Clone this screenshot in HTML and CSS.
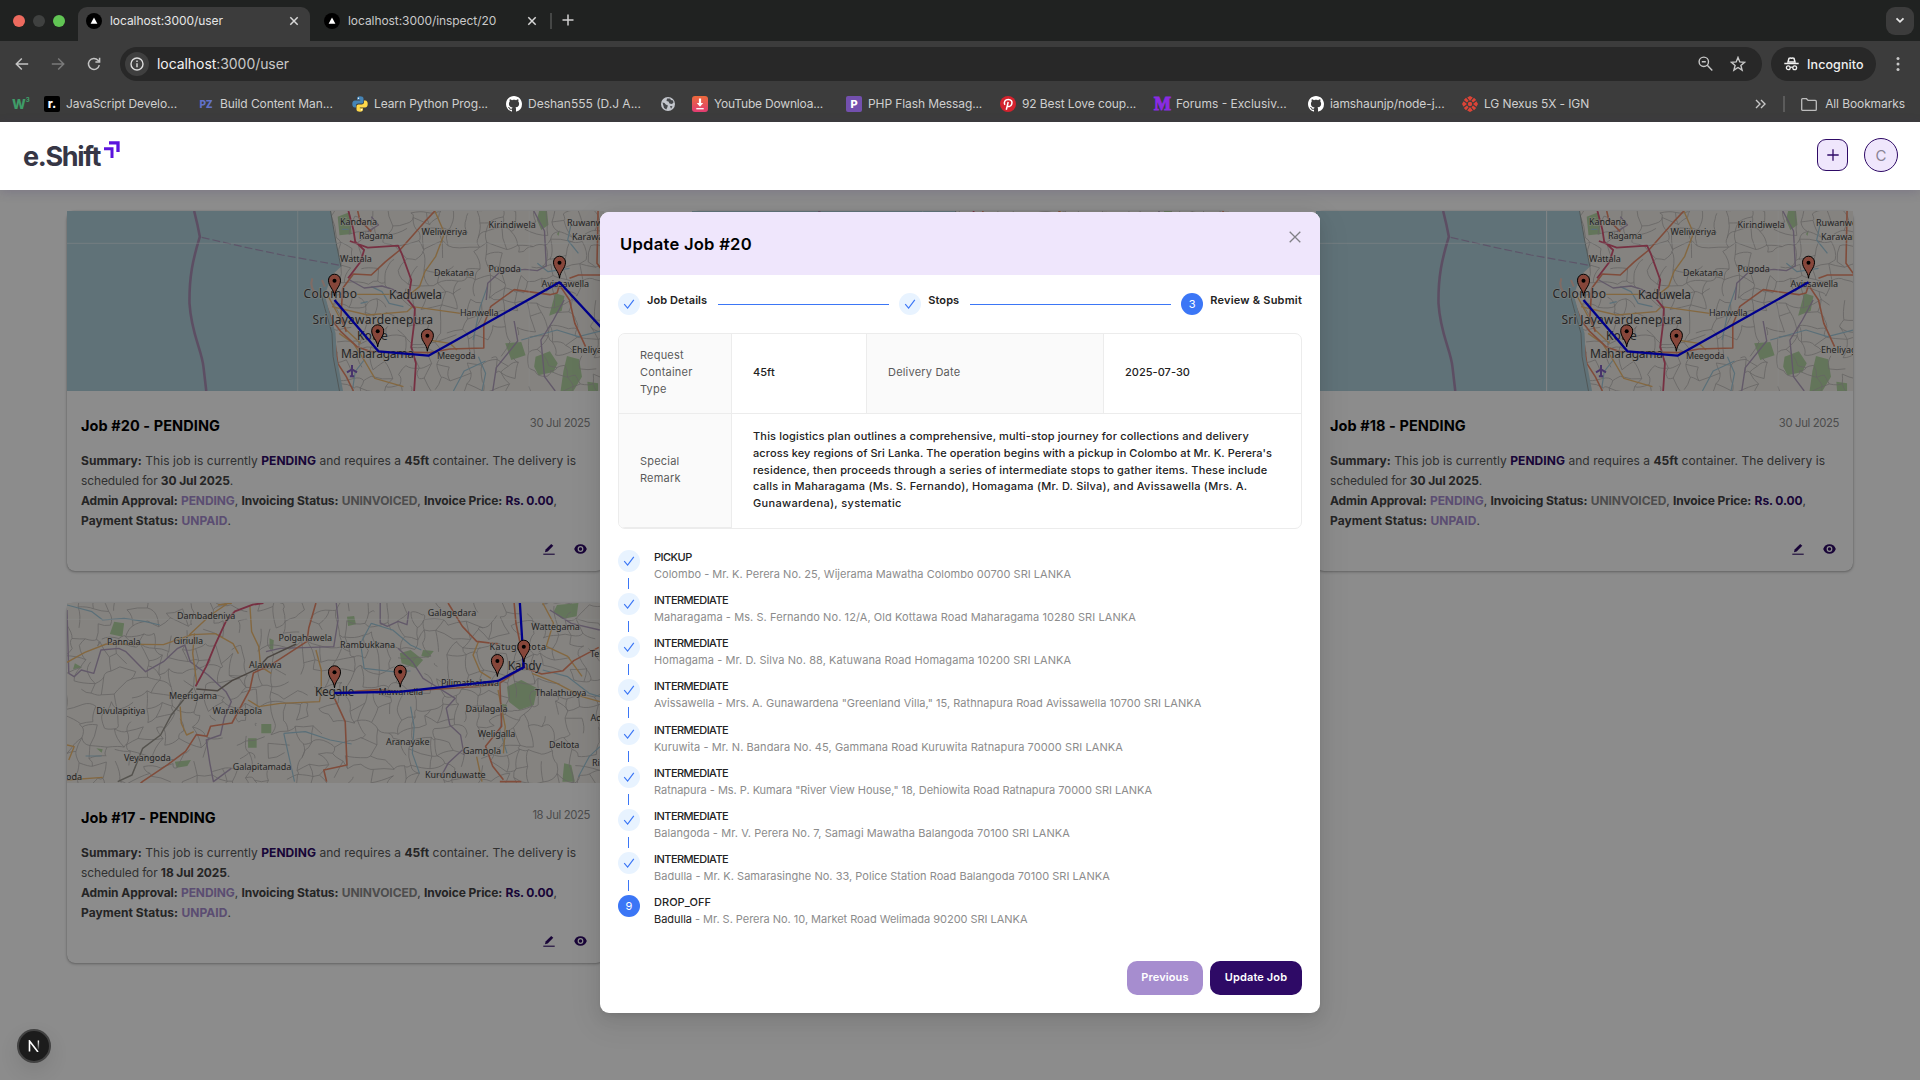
FILE: index.html
```html
<!DOCTYPE html>
<html lang="en">
<head>
<meta charset="utf-8">
<title>e.Shift</title>
<link rel="stylesheet" href="styles.css">
</head>
<body>
<svg class="defs" width="0" height="0">
  <symbol id="github" viewBox="0 0 16 16"><path fill="#fff" d="M8 0C3.58 0 0 3.58 0 8c0 3.54 2.29 6.53 5.47 7.59.4.07.55-.17.55-.38 0-.19-.01-.82-.01-1.49-2.01.37-2.53-.49-2.69-.94-.09-.23-.48-.94-.82-1.13-.28-.15-.68-.52-.01-.53.63-.01 1.08.58 1.23.82.72 1.21 1.87.87 2.33.66.07-.52.28-.87.51-1.07-1.78-.2-3.64-.89-3.64-3.95 0-.87.31-1.59.82-2.15-.08-.2-.36-1.02.08-2.12 0 0 .67-.21 2.2.82.64-.18 1.32-.27 2-.27s1.36.09 2 .27c1.53-1.04 2.2-.82 2.2-.82.44 1.1.16 1.92.08 2.12.51.56.82 1.27.82 2.15 0 3.07-1.87 3.75-3.65 3.95.29.25.54.73.54 1.48 0 1.07-.01 1.93-.01 2.2 0 .21.15.46.55.38A8.01 8.01 0 0 0 16 8c0-4.42-3.58-8-8-8z"/></symbol>
  <symbol id="favicon" viewBox="0 0 16 16"><circle cx="8" cy="8" r="8" fill="#000"/><path d="M8 4.6l3.4 6.2H4.6z" fill="#fff"/></symbol>
  <symbol id="close" viewBox="0 0 10 10"><path d="M1.3 1.3l7.4 7.4M8.7 1.3L1.3 8.7" stroke="currentColor" stroke-width="1.5" fill="none"/></symbol>
  <symbol id="check" viewBox="0 0 12 12"><path d="M1.2 6.2l3.4 3.9L10.8 1.8" stroke="#3b76f6" stroke-width="1.15" fill="none"/></symbol>
  <symbol id="pencil" viewBox="0 0 12 12"><path d="M2 9.2l.6-2.7L8.2.9l2.1 1.9-5.6 5.6z" fill="#2e0a66"/><path d="M.3 11.2h11.4" stroke="#2e0a66" stroke-width="1.1"/></symbol>
  <symbol id="eye" viewBox="0 0 13 10"><path d="M6.5.2C3.4.2 1.1 2.2.2 5c.9 2.8 3.2 4.8 6.3 4.8S11.9 7.8 12.8 5C11.9 2.2 9.6.2 6.5.2z" fill="#2e0a66"/><circle cx="6.5" cy="5" r="2.9" fill="#fff"/><circle cx="6.5" cy="5" r="1.7" fill="#2e0a66"/></symbol>
  <symbol id="pin" viewBox="-7 -8 14 26" overflow="visible"><path d="M0 15.500C-.7 8-6 6-6-.5a6 6 0 0 1 12 0C6 6 .7 8 0 15.500z" fill="#f5806a" stroke="#000" stroke-width="1"/><circle r="2" fill="#000"/></symbol>

  <symbol id="map-west" viewBox="0 0 537 180">
    <rect width="537" height="180" fill="#f2efe9"/>
    <g class="geo" transform="scale(.35714 .33333) translate(-48 -33)">
      <g fill="#b5d6a4"><path d="M1370 33h22l4 42-20 15-12-30zM1415 280l26 8-8 45-35 14zM1275 430l45-4 12 40-40 14zM1360 470l40-16 22 36-12 26-42 10-12-26zM1448 468l34 10 8 52-24 43h-36l8-60zM1505 545l30 5v23h-28zM1428 90l-8 12 4 6z"/><path d="M806 50l34-14 5 66-34 4z" fill="#d5e3b0"/></g>
      <path class="minor" data-seed="7"/>
      <g class="water"><path d="M900 260l30 15 20 35 40 10M1225 260l-20 60-20 100M1365 190l30 25 60-10M1200 470l20 50-10 53M1320 420l100-30 60 20 72-20M820 70h18M818 88h18M1480 160l-30-40 10-50M1130 573l30-60 60-30M880 480l-25 35-8 58M870 310l20-5"/></g>
      <g class="border"><path d="M1355 33l30 60 5 105-25 14-35-4-70 8-34 34-4 50M840 240l40 24 50-6 30 10 45 34M1240 573l10-70 60-80-10-60M1440 300l-30 60-35 60 10 110 30 43M900 50l20 25-30 20"/></g>
      <g class="secondary"><path d="M1078 33l27 67-25 70-30 45-15 45-35 30M860 283h95M790 320l100 25 110-10 15-15 135 20M810 400l40 30 30 50 30 55 80 25M780 290l20 40 30 60 40 40M1060 420l60 10 20 20"/></g>
      <g class="primary"><path d="M1078 33l-28 32-70 85-40 35-40 40-50-3-30 43-5 85 15 45M765 290l25 70 25 35 45 45 40 15 160 3 60-11 95-3v-70l20-55 65-50 100 15 20-5M770 300l25 100 11 90 24 40 20 43M1455 235l25-10h72M1430 260l25 40 15 70 30 70M862 33l6 27 32 35M1535 33l-3 157 20 30M1420 280l10-35"/></g>
      <g class="motorway"><path d="M836 33l14 57 5 35 25 25-10 35-35 50M840 123l50 20 85-6 10 23 27 80-9 60 19 25-2 45-8 70 13 50-5 83"/></g>
      <path class="sea" d="M48 33h738l14 87 15 80-25 25-20 60 10 40 20 75 3 70 18 103H48z"/>
      <path d="M786 33l14 87 15 80M760 285l10 40 20 75 3 70 18 103" class="coast"/>
      <path d="M735 235q-10 25 15 55M762 240l8 20" stroke="#e8c4b8" stroke-width="2"/>
      <path d="M404 33q10 42 16 77c-20 70-30 120-29 200 5 90 34 140 39 190l8 73" stroke="#a88fb5" stroke-width="2.600"/>
      <path d="M425 112l115 28 110 25 168 32" stroke="#a99abf" stroke-width="1.200" stroke-dasharray="8 3"/>
      <path d="M48 130h1504M694 33v540M1342 33v540" stroke="#fff" stroke-width=".8" opacity=".55"/>
      <path d="M846 495v33M832 517l14-9 14 9M840 529h12" stroke="#8461c4" stroke-width="2"/>
    </g>
    <g class="town">
      <text x="273" y="13.700" textLength="37">Kandana</text><text x="292" y="28" textLength="34">Ragama</text>
      <text x="354.600" y="24" textLength="45.400">Weliweriya</text><text x="421.400" y="16.500" textLength="47.500">Kirindiwela</text>
      <text x="500" y="14.500">Ruwanwella</text><text x="505" y="29">Karawanella</text>
      <text x="273" y="51" textLength="31.800">Wattala</text><text x="367" y="64.500" textLength="40">Dekatana</text>
      <text x="421.400" y="61" textLength="32.500">Pugoda</text><text x="474.600" y="76" textLength="47.500">Avissawella</text>
      <text x="393" y="104.500" textLength="38.500">Hanwella</text><text x="370" y="148" textLength="38.600">Meegoda</text>
      <text x="505" y="142">Eheliyagoda</text>
    </g>
    <g class="city">
      <text x="236.400" y="86.500" textLength="53.600">Colombo</text><text x="322" y="88.300" textLength="53">Kaduwela</text>
      <text x="245.400" y="112.500" textLength="120.700">Sri Jayawardenepura</text><text x="290" y="128.500" textLength="30.700">Kotte</text>
      <text x="274" y="147" textLength="73">Maharagama</text>
    </g>
  </symbol>
  <symbol id="pins-west" viewBox="0 0 537 180">
    <use href="#pin" x="260.500" y="61.700" width="14" height="26"/><use href="#pin" x="303.700" y="112.300" width="14" height="26"/>
    <use href="#pin" x="353.400" y="116.700" width="14" height="26"/><use href="#pin" x="485.500" y="43.700" width="14" height="26"/>
  </symbol>
</svg>

<header class="tabstrip">
  <div class="lights"><i class="red"></i><i class="dim"></i><i class="green"></i></div>
  <div class="tab active"><svg width="16" height="16"><use href="#favicon"/></svg><span>localhost:3000/user</span><svg class="x" width="10" height="10"><use href="#close"/></svg></div>
  <div class="tab"><svg width="16" height="16"><use href="#favicon"/></svg><span>localhost:3000/inspect/20</span><svg class="x" width="10" height="10"><use href="#close"/></svg></div>
  <i class="sep"></i>
  <svg class="newtab" width="12" height="12" viewBox="0 0 12 12"><path d="M6 .5v11M.5 6h11" stroke="#d0d0d0" stroke-width="1.500"/></svg>
  <div class="tabsearch"><svg width="10" height="7" viewBox="0 0 10 7"><path d="M1.500 1.300L5 4.800l3.500-3.500" stroke="#e6e6e6" stroke-width="1.800" fill="none"/></svg></div>
</header>
<div class="toolbar">
  <svg width="14" height="14" viewBox="0 0 14 14" class="tool"><path d="M13.200 7H1.500M6.800 1.500L1.300 7l5.500 5.500"/></svg>
  <svg width="14" height="14" viewBox="0 0 14 14" class="tool off"><path d="M.8 7h11.700M7.200 1.500L12.700 7l-5.500 5.500"/></svg>
  <svg width="14" height="14" viewBox="0 0 14 14" class="tool"><path d="M12.300 8.200A5.500 5.500 0 1 1 11 3.200l1.300 1.400"/><path d="M12.600.8v4.200H8.400"/></svg>
  <div class="omnibox">
    <span class="info"><svg width="14" height="14" viewBox="0 0 14 14"><circle cx="7" cy="7" r="6" fill="none" stroke="#ddd" stroke-width="1.400"/><path d="M7 6.200v4M7 3.600v1.500" stroke="#ddd" stroke-width="1.400"/></svg></span>
    <span class="url"><b>localhost</b>:3000/user</span>
    <svg class="zoomicon" width="15" height="16" viewBox="0 0 15 16"><circle cx="5.800" cy="5.800" r="4.700"/><path d="M9.300 9.300l5 5.300M3.800 5.800h4"/></svg>
    <svg class="star" width="16" height="16" viewBox="0 0 16 16"><path d="M8 1.400l1.800 4.500 4.800.4-3.700 3.100 1.200 4.700L8 11.500l-4.100 2.600 1.200-4.700L1.400 6.300l4.800-.4z"/></svg>
  </div>
  <div class="incog"><svg width="15" height="14" viewBox="0 0 15 14"><path d="M4 5L5 1.300q1-.6 2.500 0 1.500-.6 2.500 0L11 5z" fill="none" stroke="#f0f0f0" stroke-width="1.500"/><path d="M.3 6.500h14.400" stroke="#f0f0f0" stroke-width="1.500"/><g fill="none" stroke="#f0f0f0" stroke-width="1.300"><circle cx="4.300" cy="10.700" r="1.900"/><circle cx="10.700" cy="10.700" r="1.900"/><path d="M6.200 10.500q1.300-.8 2.600 0"/></g></svg><span>Incognito</span></div>
  <svg class="dots" width="4" height="16" viewBox="0 0 4 16" fill="#c8c8c8"><circle cx="2" cy="2.500" r="1.500"/><circle cx="2" cy="8" r="1.500"/><circle cx="2" cy="13.500" r="1.500"/></svg>
</div>
<nav class="bookmarks">
  <a class="only"><span class="w3">W<sup>3</sup></span></a>
  <a><i class="fav rdot">r.</i><span>JavaScript Develo...</span></a>
  <a><i class="fav pz">PZ</i><span>Build Content Man...</span></a>
  <a><svg width="16" height="16" viewBox="0 0 16 16"><path d="M8 .3C5.500.3 5 1.300 5 2.500v1.300h3.200v.6H3C1.200 4.400.3 5.800.3 8s.9 3.600 2.500 3.600H4V9.800C4 8.500 5 7.600 6.300 7.600h3.300c1.100 0 1.900-.8 1.900-1.900V2.500C11.500 1 10 .3 8 .3z" fill="#4584b6"/><path d="M8 15.700c2.500 0 3-1 3-2.200v-1.300H7.800v-.6H13c1.800 0 2.700-1.400 2.700-3.600s-.9-3.600-2.500-3.600H12v1.800c0 1.300-1 2.200-2.300 2.200H6.400c-1.100 0-1.900.8-1.900 1.900v3.200c0 1.500 1.500 2.200 3.500 2.200z" fill="#ffd94a"/><circle cx="6.500" cy="2.200" r=".7" fill="#fff"/><circle cx="9.500" cy="13.800" r=".7" fill="#fff"/></svg><span>Learn Python Prog...</span></a>
  <a><svg width="16" height="16"><use href="#github"/></svg><span class="loose">Deshan555 (D.J A...</span></a>
  <a class="only"><svg width="16" height="14" viewBox="-1 0 16 14"><circle cx="7" cy="7" r="7" fill="#c3c6cc"/><path d="M1.500 5.500l2 .5 1.500 1.700 1.600.3v1.800L5.300 12.500 3 11M6 1.500L5.500 4l2 .5 1 2 2.500.5 1.500-1.500-.5-2-2-.5-1-1.500zM9 9l2.500.3-1.500 2.500z" fill="#45474a"/></svg></a>
  <a><svg width="16" height="16" viewBox="0 0 16 16"><defs><linearGradient id="yt" x2="0" y2="1"><stop stop-color="#ec6a3c"/><stop offset="1" stop-color="#e23c72"/></linearGradient></defs><rect width="16" height="16" rx="3" fill="url(#yt)"/><path d="M8 2.500v6" stroke="#fff" stroke-width="2.200"/><path d="M4.800 7h6.400L8 10.700z" fill="#fff"/><path d="M4.300 12.700h7.400" stroke="#fff" stroke-width="1.300"/></svg><span class="tight">YouTube Downloa...</span></a>
  <a><i class="fav php">P</i><span>PHP Flash Messag...</span></a>
  <a><svg width="16" height="16" viewBox="0 0 16 16"><circle cx="8" cy="8" r="8" fill="#d3232e"/><path d="M6.300 13.800L8.200 6M4.900 8.800C3.500 6.300 5 3.400 8.300 3.400c2.800 0 4.300 2.200 3.500 4.700-.8 2.500-3.300 3.100-4.500 1.600" fill="none" stroke="#fff" stroke-width="1.500"/></svg><span>92 Best Love coup...</span></a>
  <a><i class="fav em">M</i><span class="loose">Forums - Exclusiv...</span></a>
  <a><svg width="16" height="16"><use href="#github"/></svg><span>iamshaunjp/node-j...</span></a>
  <a><svg width="16" height="16" viewBox="0 0 16 16" fill="#dc4437"><circle cx="8" cy="8" r="2.200"/><path d="M5.200 1.600L8 0l2.800 1.600L8 5zM5.200 14.400L8 16l2.800-1.600L8 11zM1.600 5.200L0 8l1.600 2.800L5 8zM14.400 5.200L16 8l-1.600 2.800L11 8zM1.800 4l2.200-2.200 2.600 3L5 6.500zM14.200 4L12 1.800l-2.600 3L11 6.500zM1.800 12L4 14.200l2.600-3L5 9.500zM14.200 12L12 14.200l-2.600-3L11 9.500z"/></svg><span>LG Nexus 5X - IGN</span></a>
  <div class="allmarks">
    <svg width="11" height="10" viewBox="0 0 11 10"><path d="M1 1l4 4-4 4M6 1l4 4-4 4" stroke="#c8c8c8" stroke-width="1.400" fill="none"/></svg>
    <i class="sep2"></i>
    <svg width="16" height="13" viewBox="0 0 16 13"><path d="M.7 11.500V1.500q0-.8.8-.8h4l1.600 1.700h7.200q1 0 1 1v8q0 .9-1 .9H1.500q-.8 0-.8-.8z" fill="none" stroke="#bdbdbd" stroke-width="1.300"/></svg>
    <span>All Bookmarks</span>
  </div>
</nav>

<div class="site-nav">
  <div class="logo"><span>e.Shift</span><svg width="16" height="17" viewBox="0 0 16 17"><path d="M5 1.800h9v9.200" stroke="#5b13dd" stroke-width="3.300" fill="none"/><path d="M0 7.800h8V17" stroke="#5b13dd" stroke-width="3" fill="none"/></svg></div>
  <div class="actions"><span class="plus"><svg width="12" height="12" viewBox="0 0 12 12"><path d="M6 .3v11.400M.3 6h11.400" stroke="#2e0a66" stroke-width="1.300"/></svg></span><span class="avatar">C</span></div>
</div>

<main>
  <section class="cards">
    <article class="card">
      <svg class="map" viewBox="0 0 537 180"><use href="#map-west"/><g class="geo" transform="scale(.35714 .33333) translate(-48 -33)"><path class="route" d="M797 300l123 154 140 13 367-220 125 145"/></g><use href="#pins-west"/></svg>
      <div class="body">
        <div class="head"><h3>Job #20 - PENDING</h3><time>30 Jul 2025</time></div>
        <p><span><b>Summary:</b> This job is currently <b class="deep">PENDING</b> and requires a <b>45ft</b> container. The delivery is</span><span>scheduled for <b>30 Jul 2025</b>.</span><span><b>Admin Approval:</b> <b class="lilac">PENDING</b>, <b>Invoicing Status:</b> <b class="gray">UNINVOICED</b>, <b>Invoice Price:</b> <b class="deep">Rs. 0.00</b>,</span><span><b>Payment Status:</b> <b class="lilac">UNPAID</b>.</span></p>
        <div class="tools"><svg width="12" height="12"><use href="#pencil"/></svg><svg width="13" height="10"><use href="#eye"/></svg></div>
      </div>
    </article>
    <article class="card"><svg class="map" viewBox="0 0 537 180"><use href="#map-west"/></svg></article>
    <article class="card">
      <svg class="map" viewBox="0 0 537 180"><use href="#map-west"/><path d="M230.500 0v180" stroke="#fff" opacity=".5"/><g class="geo" transform="scale(.35714 .33333) translate(-48 -33)"><path class="route" d="M797 300l123 154 140 13 367-220"/></g><use href="#pins-west"/></svg>
      <div class="body">
        <div class="head"><h3>Job #18 - PENDING</h3><time>30 Jul 2025</time></div>
        <p><span><b>Summary:</b> This job is currently <b class="deep">PENDING</b> and requires a <b>45ft</b> container. The delivery is</span><span>scheduled for <b>30 Jul 2025</b>.</span><span><b>Admin Approval:</b> <b class="lilac">PENDING</b>, <b>Invoicing Status:</b> <b class="gray">UNINVOICED</b>, <b>Invoice Price:</b> <b class="deep">Rs. 0.00</b>,</span><span><b>Payment Status:</b> <b class="lilac">UNPAID</b>.</span></p>
        <div class="tools"><svg width="12" height="12"><use href="#pencil"/></svg><svg width="13" height="10"><use href="#eye"/></svg></div>
      </div>
    </article>
    <article class="card">
      <svg class="map" viewBox="0 0 537 180">
        <rect width="537" height="180" fill="#f2efe9"/>
        <g class="geo" transform="scale(.35714 .33333) translate(-48 -39)">
          <g fill="#b5d6a4"><path d="M180 95l28 5-5 40-35-8zM980 190l30-10 35 30-20 25-40-15zM1045 180l30 3-15 20-20-5zM832 80l20-2 5 25-22 5zM592 402h28v28h-28zM555 445h24v28h-24zM1420 45l60-6-5 40-40 8-25-20zM1280 290l40-20 45 25-10 50-40 15-30-25zM350 515l45-5-10 18-30 5zM1440 520l20 5 10 50h-35zM70 220l20 12-25 6zM615 145l12 6-2 30-10-5zM130 475l18 3-3 10zM1260 340l20 5-5 20z"/></g>
          <path class="minor" data-seed="23"/>
          <g class="water"><path d="M48 45l70 20 30 25 60-5 60 10 40 10M900 100l-30 60 10 75 80 10 50-2M900 100l60 20 50 45 30 15M655 430l60-5 70 25 60 12M655 430l30 145M1010 350l10 60-5 80 20 60M1380 240l70 20 60 50 30 10M1540 470l-30 30-30 60M100 498h45M1270 360l-10 60 20 70"/></g>
          <g class="border"><path d="M48 60l5 190 15 10 20-20 35 10 20-70 50-5 20 10 55 60 50-30 40-40 20-10 15 50 50 40 50 50 15 30-20 50-10 50-40 15 10 70 10 55 50-40M605 185l40-10 150-5 12-80-5-51M925 39v60l20 10 30-15 25 10 5-40M975 175l40 40 30 50 30 20 60 40-25 30 10 50 30 30 10 60M1155 480l-40 40-20 40M1400 60l60 40 80 20"/></g>
          <path d="M400 295l-60 80-30 60-50 40-30 80-40 20" stroke="#9c9890" stroke-width="1.500"/>
          <path d="M410 297l60 5 40-30 70-35 30-35 80-40" stroke="#8a8078" stroke-width="1.500"/>
          <g class="secondary"><path d="M48 217l50-30 60-25 160 2 80-30 65-3 50 30 15 30M405 130l-5 60 12 95M390 135l60-60 50-36M560 45l5 80 20 45 5 60 30 20M745 180l15 60 0 60-5 35-110 5-60 10-30-20M365 350l3 50 15 35 20-10M48 465l20 5-15 40M48 570l100-8M1200 155l-15 40 20 50 30 20M1380 39l30 60-20 70 60 30 40 60M1350 250l70 30 70 40 50 15M1195 500l15 75M1255 300l20 110-5 80M470 45l40-6"/></g>
          <g class="primary"><path d="M745 39l-20 75-5 40-100 70-50 25-10 50-50 100-60 10-10 30-30-5-30 50-50 40-70 50-40 40M797 325l30 70 5 130-65 15 8 35M797 309l120-10 60 5 160-10 110-10M1115 39l40 70 40 45 60 8M1300 39l5 60 25 130-70 50 5 130-45 60 20 60 30 40M1327 232l50 20 60-10 30-30 70-40M1260 575l60 0"/></g>
          <g class="motorway"><path d="M598 39l-30 5-50 20-25 30-30 70-25 65-30 60"/></g>
          <path d="M48 88h1504" stroke="#fff" stroke-width=".8" opacity=".55"/>
        </g>
        <g class="town">
          <text x="110" y="16" textLength="58.200">Dambadeniya</text><text x="40" y="41.500" textLength="33.500">Pannala</text><text x="106.500" y="41" textLength="29.600">Giriulla</text>
          <text x="182" y="64.500" textLength="32.500">Alawwa</text><text x="211.500" y="37.500" textLength="53.500">Polgahawela</text><text x="273" y="45" textLength="55">Rambukkana</text>
          <text x="360.700" y="13" textLength="48.600">Galagedara</text><text x="464.300" y="27" textLength="48.600">Wattegama</text><text x="422.500" y="46.500" textLength="56.500">Katugastota</text>
          <text x="374" y="83" textLength="58">Pilimathalawa</text><text x="468" y="93" textLength="51.400">Thalathuoya</text><text x="311.400" y="92.300" textLength="44.600">Mawanella</text>
          <text x="102" y="95.500" textLength="48">Meerigama</text><text x="29.300" y="110.700" textLength="49">Divulapitiya</text><text x="145.400" y="110.700" textLength="49.600">Warakapola</text>
          <text x="398.600" y="109.300" textLength="42">Daulagala</text><text x="410.700" y="134" textLength="37.500">Weligalla</text><text x="482" y="145" textLength="30.400">Deltota</text>
          <text x="396" y="151.300" textLength="38">Gampola</text><text x="319" y="142" textLength="43.600">Aranayake</text><text x="57" y="158" textLength="46.800">Veyangoda</text>
          <text x="165.700" y="167" textLength="58.600">Galapitamada</text><text x="358" y="175.300" textLength="60.700">Kurunduwatte</text><text x="-1" y="177.300">oda</text>
          <text x="523" y="53.700">Tel</text><text x="523.600" y="118">Ad</text><text x="525" y="162.700">Ri</text>
        </g>
        <g class="city"><text x="440.700" y="66.500" textLength="33.600">Kandy</text><text x="248" y="92.500" textLength="39.300">Kegalle</text></g>
        <path d="M267.500 90l67-1.300 96.500-10.700 25.700-13.700-1.400-25.600-2.500-40" fill="none" stroke="#00f" stroke-width="2.300"/>
        <use href="#pin" x="260.500" y="61.300" width="14" height="26"/><use href="#pin" x="326.200" y="60.700" width="14" height="26"/><use href="#pin" x="423.400" y="50" width="14" height="26"/><use href="#pin" x="449.800" y="35.700" width="14" height="26"/>
      </svg>
      <div class="body">
        <div class="head"><h3>Job #17 - PENDING</h3><time>18 Jul 2025</time></div>
        <p><span><b>Summary:</b> This job is currently <b class="deep">PENDING</b> and requires a <b>45ft</b> container. The delivery is</span><span>scheduled for <b>18 Jul 2025</b>.</span><span><b>Admin Approval:</b> <b class="lilac">PENDING</b>, <b>Invoicing Status:</b> <b class="gray">UNINVOICED</b>, <b>Invoice Price:</b> <b class="deep">Rs. 0.00</b>,</span><span><b>Payment Status:</b> <b class="lilac">UNPAID</b>.</span></p>
        <div class="tools"><svg width="12" height="12"><use href="#pencil"/></svg><svg width="13" height="10"><use href="#eye"/></svg></div>
      </div>
    </article>
  </section>

  <div class="overlay">
    <div class="modal">
      <div class="modal-head"><h2>Update Job #20</h2><svg width="12" height="12" viewBox="0 0 12 12"><path d="M.7.7l10.600 10.600M11.300.7L.7 11.300" stroke="#808086" stroke-width="1.300"/></svg></div>
      <div class="steps">
        <span class="dot"><svg width="12" height="12"><use href="#check"/></svg></span><b>Job Details</b><i></i>
        <span class="dot"><svg width="12" height="12"><use href="#check"/></svg></span><b>Stops</b><i></i>
        <span class="dot now">3</span><b class="last">Review &amp; Submit</b>
      </div>
      <div class="table">
        <div class="th">Request<br>Container<br>Type</div><div>45ft</div><div class="th">Delivery Date</div><div>2025-07-30</div>
        <div class="th">Special<br>Remark</div>
        <div class="remark"><span>This logistics plan outlines a comprehensive, multi-stop journey for collections and delivery</span><span>across key regions of Sri Lanka. The operation begins with a pickup in Colombo at Mr. K. Perera's</span><span>residence, then proceeds through a series of intermediate stops to gather items. These include</span><span>calls in Maharagama (Ms. S. Fernando), Homagama (Mr. D. Silva), and Avissawella (Mrs. A.</span><span>Gunawardena), systematic</span></div>
      </div>
      <ol class="route-list">
        <li><span class="dot"><svg width="12" height="12"><use href="#check"/></svg></span><div><b>PICKUP</b><span>Colombo - Mr. K. Perera No. 25, Wijerama Mawatha Colombo 00700 SRI LANKA</span></div></li>
        <li class="wide"><span class="dot"><svg width="12" height="12"><use href="#check"/></svg></span><div><b>INTERMEDIATE</b><span>Maharagama - Ms. S. Fernando No. 12/A, Old Kottawa Road Maharagama 10280 SRI LANKA</span></div></li>
        <li class="wide"><span class="dot"><svg width="12" height="12"><use href="#check"/></svg></span><div><b>INTERMEDIATE</b><span>Homagama - Mr. D. Silva No. 88, Katuwana Road Homagama 10200 SRI LANKA</span></div></li>
        <li><span class="dot"><svg width="12" height="12"><use href="#check"/></svg></span><div><b>INTERMEDIATE</b><span>Avissawella - Mrs. A. Gunawardena "Greenland Villa," 15, Rathnapura Road Avissawella 10700 SRI LANKA</span></div></li>
        <li class="wide"><span class="dot"><svg width="12" height="12"><use href="#check"/></svg></span><div><b>INTERMEDIATE</b><span>Kuruwita - Mr. N. Bandara No. 45, Gammana Road Kuruwita Ratnapura 70000 SRI LANKA</span></div></li>
        <li class="narrow"><span class="dot"><svg width="12" height="12"><use href="#check"/></svg></span><div><b>INTERMEDIATE</b><span>Ratnapura - Ms. P. Kumara "River View House," 18, Dehiowita Road Ratnapura 70000 SRI LANKA</span></div></li>
        <li class="wide"><span class="dot"><svg width="12" height="12"><use href="#check"/></svg></span><div><b>INTERMEDIATE</b><span>Balangoda - Mr. V. Perera No. 7, Samagi Mawatha Balangoda 70100 SRI LANKA</span></div></li>
        <li><span class="dot"><svg width="12" height="12"><use href="#check"/></svg></span><div><b>INTERMEDIATE</b><span>Badulla - Mr. K. Samarasinghe No. 33, Police Station Road Balangoda 70100 SRI LANKA</span></div></li>
        <li class="narrow"><span class="dot now">9</span><div><b class="drop">DROP_OFF</b><span><em>Badulla</em> - Mr. S. Perera No. 10, Market Road Welimada 90200 SRI LANKA</span></div></li>
      </ol>
      <div class="modal-foot"><button class="prev">Previous</button><button class="save">Update Job</button></div>
    </div>
  </div>
  <div class="next-badge"><svg width="12" height="12" viewBox="0 0 12 12"><defs><linearGradient id="nfade" x2="0" y2="1"><stop stop-color="#fff"/><stop offset="1" stop-color="#fff" stop-opacity=".1"/></linearGradient></defs><path d="M1.500 11.500V1l8.500 11" stroke="#fff" stroke-width="1.600" fill="none"/><path d="M9.700.5h1.400v9H9.700z" fill="url(#nfade)"/></svg></div>
</main>
<script src="script.js"></script>
</body>
</html>
```
FILE: styles.css
```css
* { box-sizing: border-box; }
body { margin: 0; width: 1920px; height: 1080px; overflow: hidden; display: flex; flex-direction: column; font-family: Inter, "Liberation Sans", sans-serif; font-size: 11px; background: #8c8c8c; color: #222; }
svg { display: block; flex: none; }
.defs { position: absolute; }
h2, h3, p, ol { margin: 0; padding: 0; }
i, em { font-style: normal; }

/* browser frame */
.tabstrip { height: 41px; background: #202221; display: flex; align-items: center; flex: none; }
.lights { display: flex; gap: 8px; padding-left: 13px; width: 78px; }
.lights i { width: 12px; height: 12px; border-radius: 50%; }
.red { background: #ed6a5e; } .dim { background: #3f4140; } .green { background: #61c554; }
.tab { display: flex; align-items: center; width: 232px; height: 34px; padding: 0 11px 6px 8px; margin-top: 7px; color: #c9c9c9; font-size: 12px; letter-spacing: -.065px; white-space: nowrap; }
.tab + .tab { width: 237px; padding: 0 10px 6px 14px; }
.tab span { margin: -1px auto 0 8px; }
.tab.active { background: #3c3c3c; border-radius: 9px 9px 0 0; color: #e6e6e6; }
.tab .x { color: #d8d8d8; }
.sep { width: 2px; height: 16px; background: #454746; margin-left: 3px; }
.newtab { margin: 0 0 1px 10px; }
.tabsearch { margin-left: auto; margin-right: 6px; width: 28px; height: 28px; border-radius: 9px; background: #3c3c3c; display: flex; align-items: center; justify-content: center; }
.toolbar { height: 46px; background: #3c3c3c; display: flex; align-items: center; padding: 0 20px 0 15px; flex: none; }
.tool { fill: none; stroke: #c4c4c4; stroke-width: 1.5; margin-right: 22px; }
.tool.off { stroke: #7a7a7a; }
.omnibox { width: 1642px; height: 34px; margin-left: -3px; border-radius: 17px; background: #282828; display: flex; align-items: center; padding: 0 16px 0 5px; }
.info { width: 24px; height: 24px; border-radius: 50%; background: #3f3f3f; display: flex; align-items: center; justify-content: center; }
.url { margin: -1px auto 0 8px; font-size: 14px; letter-spacing: -.06px; color: #c8c8c8; }
.url b { font-weight: 400; color: #f2f2f2; }
.zoomicon, .star { fill: none; stroke: #c8c8c8; stroke-width: 1.4; }
.star { margin-left: 17px; }
.incog { margin-left: 9px; width: 105px; height: 34px; border-radius: 17px; background: #282828; color: #f0f0f0; font-size: 12.5px; font-weight: 500; letter-spacing: .1px; display: flex; align-items: center; gap: 8px; padding-left: 13px; }
.dots { margin-left: 20px; }
.bookmarks { height: 35px; background: #3c3c3c; display: flex; align-items: center; padding: 0 0 1px 12px; color: #cfcfcf; font-size: 12px; letter-spacing: -.1px; flex: none; }
.bookmarks a { width: 154px; display: flex; align-items: center; gap: 6px; white-space: nowrap; flex: none; }
.bookmarks a span { margin-top: -1px; }
.bookmarks a.only { width: 32px; }
.bookmarks .loose { letter-spacing: 0; }
.bookmarks .tight { letter-spacing: -.19px; }
.fav { width: 16px; height: 16px; font-weight: 800; font-size: 12px; line-height: 16px; text-align: center; color: #fff; }
.rdot { background: #000; border-radius: 2px; }
.pz { color: #6272c9; font-size: 10px; }
.php { background: #7350ae; border-radius: 2px; font-size: 11px; }
.em { color: #8a2be2; font: 900 18px/16px "Liberation Serif", serif; -webkit-text-stroke: 1px #8a2be2; }
.w3 { color: #3f9c68; font: 800 13px/16px Inter, sans-serif; display: flex; }
.w3 sup { font-size: 6px; line-height: 8px; }
.allmarks { margin-left: auto; display: flex; align-items: center; padding-right: 15px; }
.sep2 { width: 2px; height: 16px; background: #5b5b5b; margin: 0 16px 0 17px; }
.allmarks span { margin: -1px 0 0 8px; }

/* site header */
.site-nav { height: 68px; background: #fff; display: flex; align-items: center; justify-content: space-between; padding: 0 22px 2px 23px; flex: none; position: relative; z-index: 3; box-shadow: 0 2px 10px rgba(70, 50, 110, .22); }
.logo { display: flex; align-items: flex-start; gap: 4px; color: #363645; font-size: 27px; font-weight: 700; letter-spacing: -1.35px; line-height: 32px; padding-top: 4px; }
.actions { display: flex; align-items: center; gap: 16px; }
.plus, .avatar { background: #efe6fc; border: 1px solid #2e0a66; display: flex; align-items: center; justify-content: center; }
.plus { width: 31px; height: 32px; border-radius: 9px; }
.avatar { width: 34px; height: 34px; border-radius: 50%; color: #8a8394; font-size: 15px; }

/* job cards */
main { flex: 1; position: relative; background: #fff; }
.cards { display: grid; grid-template-columns: repeat(3, 537px); gap: 32px 87.5px; padding: 21px 0 0 67px; }
.card { height: 360px; background: #fff; border-radius: 8px; box-shadow: 0 1px 3px rgba(0, 0, 0, .3), 0 0 1px rgba(0, 0, 0, .3); }
.map { width: 537px; height: 180px; }
.geo path { fill: none; vector-effect: non-scaling-stroke; stroke-linejoin: round; }
.geo g[fill] path { fill: inherit; }
.geo path[fill="#d5e3b0"] { fill: #d5e3b0; }
.geo .sea { fill: #b0d0da; }
.minor { stroke: #bbb7b6; stroke-width: .8; }
.water path { stroke: #a5cbdc; stroke-width: 1.2; }
.border path { stroke: #b4a3c0; stroke-width: 1.4; }
.coast { stroke: #94a0a0; stroke-width: 1; }
.secondary path { stroke: #f0bd76; stroke-width: 1.4; }
.primary path { stroke: #ea8b6c; stroke-width: 1.6; }
.motorway path { stroke: #d85878; stroke-width: 1.8; }
.geo .route { stroke: #00f; stroke-width: 2.3; }
.town text, .city text { font-family: "Noto Sans", sans-serif; fill: #444; stroke: #f2efe9; stroke-width: 1.5; stroke-opacity: .6; paint-order: stroke; }
.town text { font-size: 9px; }
.city text { font-size: 12px; }
.body { padding: 23px 14px 0; }
.head { display: flex; justify-content: space-between; align-items: flex-start; }
.head h3 { font-size: 14.5px; line-height: 24px; font-weight: 700; letter-spacing: .08px; color: #000; }
.head time { font-size: 11.3px; line-height: 18px; letter-spacing: -.36px; color: #8c8c8c; }
.body p { margin-top: 13px; font-size: 12px; line-height: 20px; color: #595959; white-space: nowrap; }
.body p span { display: block; letter-spacing: .045px; }
.body p span:nth-child(2) { letter-spacing: -.12px; }
.body p span:nth-child(3) { letter-spacing: -.082px; }
.body p b { color: #444; font-weight: 700; }
.body p .deep { color: #2e0a66; }
.body p .lilac { color: #a68dcf; }
.body p .gray { color: #8c8c8c; }
.tools { display: flex; justify-content: flex-end; align-items: center; gap: 19px; padding: 12px 3px 0 0; }

/* dialog */
.overlay { position: absolute; inset: 0; z-index: 1; background: rgba(0, 0, 0, .45); display: flex; justify-content: center; align-items: flex-start; padding-top: 22px; }
.modal { width: 720px; height: 801px; background: #fff; border-radius: 9px; overflow: hidden; box-shadow: 0 6px 16px rgba(0, 0, 0, .08), 0 3px 6px -4px rgba(0, 0, 0, .12), 0 9px 28px 8px rgba(0, 0, 0, .05); }
.modal-head { height: 63px; background: #efe6fc; display: flex; justify-content: space-between; padding: 19px 19px 0 20px; }
.modal-head h2 { font-size: 16.6px; line-height: 26px; font-weight: 600; letter-spacing: .25px; color: #000; }
.dot { width: 22px; height: 22px; border-radius: 50%; background: #e8f3ff; display: flex; align-items: center; justify-content: center; flex: none; }
.dot.now { background: #3b76f6; color: #fff; font-size: 11px; }
.steps { display: flex; align-items: center; padding: 18px 18px 0; height: 40px; }
.steps b { font-weight: 600; font-size: 11px; line-height: 16px; letter-spacing: .09px; margin: -8px 0 0 7px; white-space: nowrap; }
.steps .last { letter-spacing: .22px; }
.steps i { height: 1px; background: #3b76f6; flex: 171 0 0; margin: 0 10.5px 0 11px; }
.steps i ~ i { flex-grow: 201; }
.table { margin: 18px 18px 0; height: 196px; border: 1px solid #ececec; border-radius: 7px; overflow: hidden; display: grid; grid-template: 80px 1fr / 113px 135px 237px 1fr; font-weight: 500; line-height: 16.8px; letter-spacing: .03px; }
.table > div { padding: 0 22px 2px 21px; display: flex; align-items: center; border-left: 1px solid #ececec; border-bottom: 1px solid #ececec; margin: 0 0 0 -1px; }
.table > .th { background: #fafafa; color: #5a5a5a; font-weight: 400; letter-spacing: .2px; }
.table > .remark { grid-column: span 3; flex-direction: column; align-items: flex-start; justify-content: center; white-space: nowrap; border-bottom: 0; letter-spacing: .17px; }
.remark span:nth-child(2) { letter-spacing: .09px; }
.remark span:nth-child(4) { letter-spacing: .22px; }
.remark span:nth-child(5) { letter-spacing: .34px; }
.route-list { list-style: none; margin: 21px 18px 0; }
.route-list li { display: flex; height: 43.15px; gap: 14px; position: relative; }
.route-list li:not(:last-child)::after { content: ""; position: absolute; left: 10px; top: 28px; width: 1px; height: 11px; background: #3b76f6; }
.route-list div { display: flex; flex-direction: column; line-height: 17px; white-space: nowrap; margin-top: -1px; }
.route-list b { font-weight: 500; letter-spacing: -.53px; }
.route-list .drop { letter-spacing: .04px; }
.route-list div span { color: #8c8c8c; letter-spacing: .022px; }
.route-list .wide div span { letter-spacing: .08px; }
.route-list .narrow div span { letter-spacing: -.03px; }
.route-list em { color: #222; }
.modal-foot { display: flex; justify-content: flex-end; gap: 7px; padding: 23px 18px 0; }
.modal-foot button { height: 34px; border: 0; border-radius: 10px; color: #fff; font: 600 11px Inter, sans-serif; letter-spacing: .12px; padding: 0 0 2px; }
.prev { width: 76px; background: #a68dcf; }
.save { width: 92px; background: #2e0a66; }
.next-badge { position: absolute; z-index: 4; left: 17px; bottom: 17px; width: 34px; height: 34px; border-radius: 50%; background: #1c1c1c; border: 2px solid #424242; display: flex; align-items: center; justify-content: center; box-shadow: 0 8px 20px rgba(0, 0, 0, .1); }
```
FILE: script.js
```js
// Fills each map with a web of minor roads, repeatable for a given seed.
document.querySelectorAll('.minor').forEach(function (path) {
  var s = +path.dataset.seed;
  function rnd() { s = (s * 16807) % 2147483647; return s / 2147483647; }
  for (var k = 0; k < 9; k++) rnd();
  var step = 36, cols = 43, rows = 17, pts = [], d = '';
  for (var r = 0; r < rows; r++) {
    pts.push([]);
    for (var c = 0; c < cols; c++) pts[r].push([48 + c * step + (rnd() - .5) * 34, 25 + r * step + (rnd() - .5) * 34]);
  }
  function edge(a, b) {
    d += 'M' + a[0].toFixed(1) + ' ' + a[1].toFixed(1) + 'Q' + ((a[0] + b[0]) / 2 + (rnd() - .5) * 22).toFixed(1) + ' ' + ((a[1] + b[1]) / 2 + (rnd() - .5) * 22).toFixed(1) + ' ' + b[0].toFixed(1) + ' ' + b[1].toFixed(1);
  }
  for (r = 0; r < rows - 1; r++) for (c = 0; c < cols - 1; c++) {
    if (rnd() < .62) edge(pts[r][c], pts[r][c + 1]);
    if (rnd() < .62) edge(pts[r][c], pts[r + 1][c]);
  }
  path.setAttribute('d', d);
});
```
